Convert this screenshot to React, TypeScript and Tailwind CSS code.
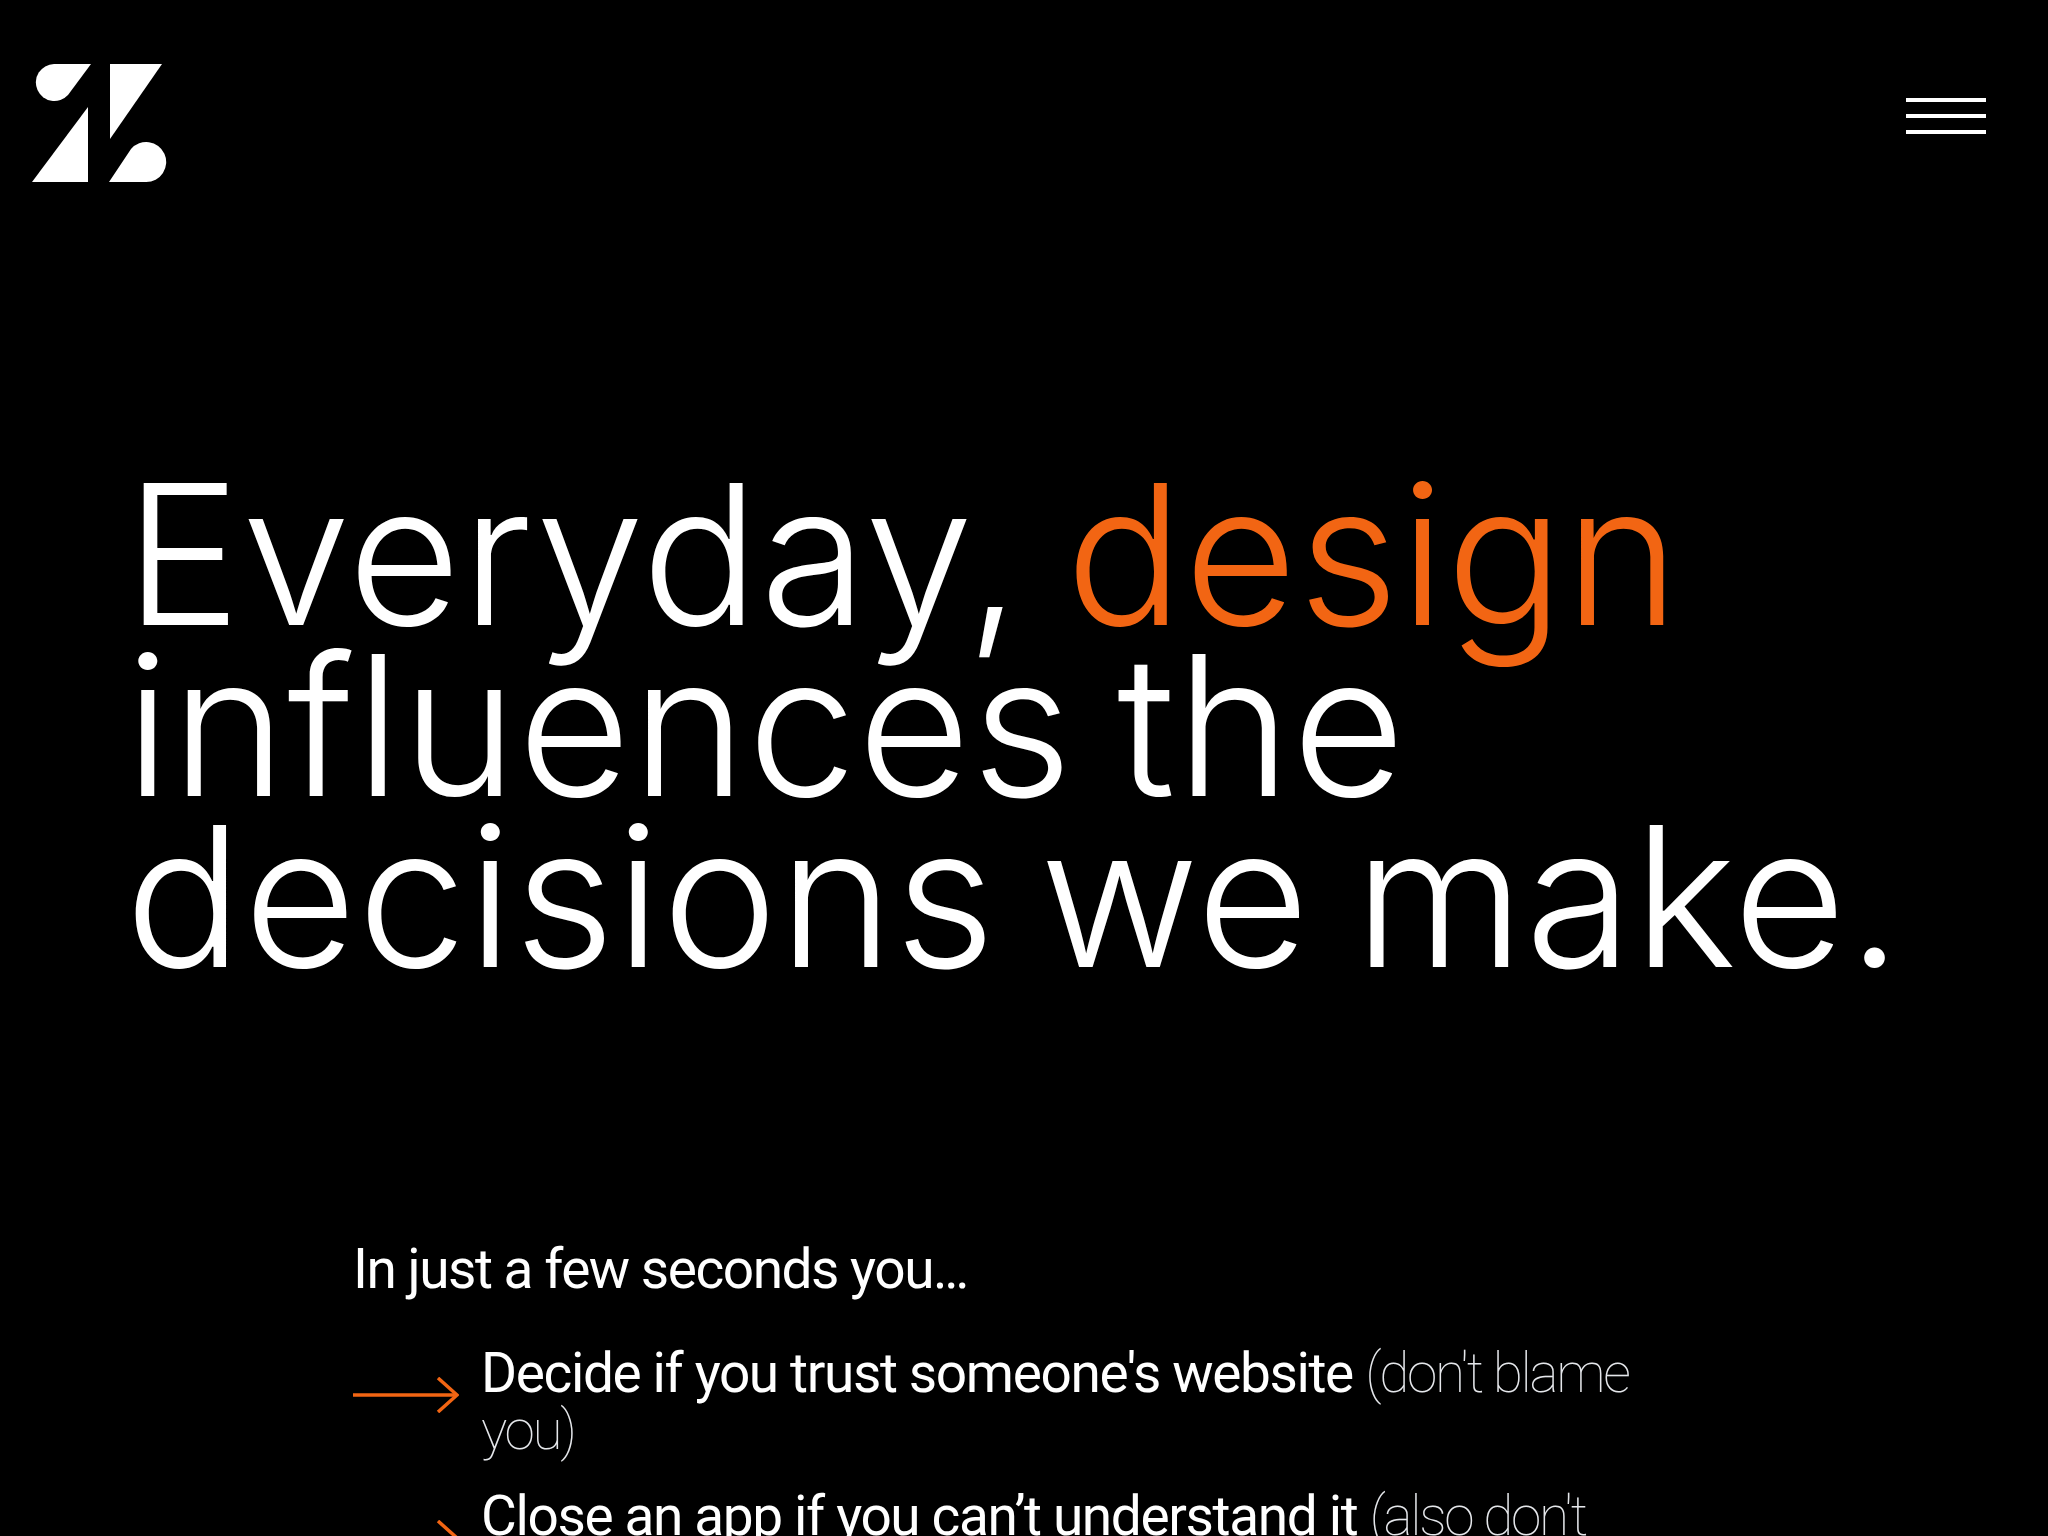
import React from 'react';

const Logo = () => (
  <svg className="w-[136px] h-[120px] shrink-0" viewBox="0 0 136 120" fill="#fff">
    <path d="M59 0 H22 A18.500 18.500 0 1 0 36 31 Z" />
    <path d="M56 43 V118 H0 Z" />
    <path d="M78 0 H130 L78 75 Z" />
    <path d="M77 118 L99 85 A20 20 0 1 1 114 118 Z" />
  </svg>
);

const Arrow = () => (
  <svg className="w-[106px] h-[36px] shrink-0 mt-[32px]" viewBox="0 0 106 36" fill="none" stroke="#f26513" strokeWidth="3.5">
    <path d="M0 18 H104" />
    <path d="M85 1 L104 18 L85 35" />
  </svg>
);

const items = [
  { main: "Decide if you trust someone's website", aside: "(don't blame you)" },
  { main: 'Close an app if you can’t understand it', aside: "(also don't blame yourself)" },
];

export default function App() {
  return (
    <div className="h-[1536px] overflow-hidden bg-black text-white font-['Inter',sans-serif]">
      <header className="flex items-start justify-between pt-[64px] pl-[32px] pr-[62px]">
        <Logo />
        <button className="flex flex-col gap-[12px] w-[80px] mt-[34px]">
          <span className="block h-[4px] bg-white" />
          <span className="block h-[4px] bg-white" />
          <span className="block h-[4px] bg-white" />
        </button>
      </header>
      <main className="pl-[125px]">
        <h1 className="mt-[285px] text-[195px] leading-[171px] font-light whitespace-nowrap tracking-[1px] [word-spacing:-12px]">
          Everyday, <span className="text-[#f26513]">design</span>
          <br />
          influences the
          <br />
          decisions we make.
        </h1>
        <section className="mt-[258px] ml-[228px] w-[1330px] font-['Roboto',sans-serif]">
          <p className="text-[55px] leading-[58px] tracking-[-0.027em]">
            In just a few seconds you<span className="tracking-[-0.06em]">...</span>
          </p>
          <ul className="mt-[47px] flex flex-col gap-[29px]">
            {items.map((item) => (
              <li key={item.main} className="flex items-start gap-[22px]">
                <Arrow />
                <p className="text-[55px] leading-[57px] tracking-[-0.025em]">
                  {item.main} <span className="font-thin text-gray-200 tracking-[-0.042em]">{item.aside}</span>
                </p>
              </li>
            ))}
          </ul>
        </section>
      </main>
    </div>
  );
}
